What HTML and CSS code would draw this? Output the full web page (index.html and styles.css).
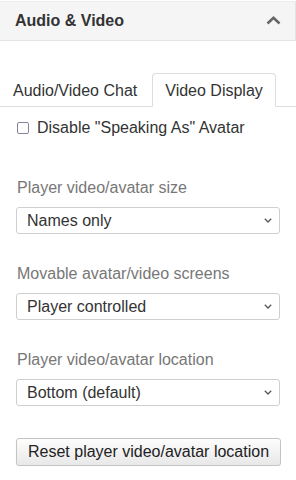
FILE: index.html
```html
<!DOCTYPE html>
<html lang="en">
<head>
    <meta charset="UTF-8">
    <meta name="viewport" content="width=device-width, initial-scale=1.0">
    <title>Audio &amp; Video</title>
    <link rel="stylesheet" href="styles.css">
</head>
<body>
    <div class="panel">
        <!-- Cabecera del panel -->
        <div class="panel-heading">
            <span class="panel-title">Audio &amp; Video</span>
            <svg class="collapse-icon" width="15" height="9" viewBox="0 0 15 9">
                <polyline points="1.5,7.5 7.5,1.8 13.5,7.5" fill="none" stroke="#666" stroke-width="2.6"/>
            </svg>
        </div>

        <!-- Pestañas -->
        <ul class="nav-tabs">
            <li class="tab">Audio/Video Chat</li>
            <li class="tab active">Video Display</li>
        </ul>

        <div class="tab-pane">
            <label class="check-row">
                <input type="checkbox" class="check">
                <span>Disable "Speaking As" Avatar</span>
            </label>

            <div class="field">
                <label for="avatarSize">Player video/avatar size</label>
                <div class="select-wrap">
                    <select id="avatarSize">
                        <option>Names only</option>
                        <option>Small</option>
                        <option>Medium</option>
                        <option>Large</option>
                    </select>
                    <svg class="select-arrow" width="8" height="5" viewBox="0 0 8 5">
                        <polyline points="0.8,0.8 4,4 7.2,0.8" fill="none" stroke="#555" stroke-width="1.3"/>
                    </svg>
                </div>
            </div>

            <div class="field">
                <label for="movable">Movable avatar/video screens</label>
                <div class="select-wrap">
                    <select id="movable">
                        <option>Player controlled</option>
                        <option>Locked</option>
                    </select>
                    <svg class="select-arrow" width="8" height="5" viewBox="0 0 8 5">
                        <polyline points="0.8,0.8 4,4 7.2,0.8" fill="none" stroke="#555" stroke-width="1.3"/>
                    </svg>
                </div>
            </div>

            <div class="field">
                <label for="location">Player video/avatar location</label>
                <div class="select-wrap">
                    <select id="location">
                        <option>Bottom (default)</option>
                        <option>Top</option>
                        <option>Left</option>
                        <option>Right</option>
                    </select>
                    <svg class="select-arrow" width="8" height="5" viewBox="0 0 8 5">
                        <polyline points="0.8,0.8 4,4 7.2,0.8" fill="none" stroke="#555" stroke-width="1.3"/>
                    </svg>
                </div>
            </div>

            <button type="button" class="btn">Reset player video/avatar location</button>
        </div>
    </div>
</body>
</html>
```

FILE: styles.css
```css
body {
    font-family: Arial, "Liberation Sans", sans-serif;
    font-size: 16px;
    color: #333;
    margin: 0;
    padding: 0;
    background-color: #ffffff;
}
.panel {
    width: 296px;
}
.panel-heading {
    margin-top: 1px;
    height: 38px;
    display: flex;
    align-items: center;
    justify-content: space-between;
    padding: 0 15px;
    background-color: #f5f5f5;
    border: 1px solid #e4e4e4;
    border-left: none;
    border-top-color: #ececec;
}
.panel-title {
    font-weight: bold;
    color: #333;
    line-height: 20px;
}
.collapse-icon {
    display: block;
    margin-right: -1px;
    margin-top: -2px;
}
.nav-tabs {
    list-style: none;
    margin: 32px 0 0;
    padding: 0;
    display: flex;
    border-bottom: 1px solid #ddd;
}
.tab {
    margin: 0 2px -1px 0;
    padding: 7px 12px 5px;
    line-height: 20px;
    border: 1px solid transparent;
    border-radius: 4px 4px 0 0;
    color: #333;
}
.tab.active {
    border-color: #ddd;
    border-bottom-color: #fff;
    background-color: #fff;
}
.tab-pane {
    padding: 11px 16px 0;
}
.check-row {
    display: flex;
    align-items: center;
    line-height: 20px;
    color: #333;
}
.check {
    appearance: none;
    -webkit-appearance: none;
    width: 12px;
    height: 12px;
    margin: 0 8px 0 1px;
    border: 1px solid #85859a;
    border-radius: 2px;
    background-color: #fff;
}
.field {
    margin-top: 40px;
}
.field + .field {
    margin-top: 30px;
}
.field label {
    display: block;
    line-height: 20px;
    margin: 0 0 9px 1px;
    color: #777;
}
.select-wrap {
    position: relative;
    width: 264px;
}
select {
    appearance: none;
    -webkit-appearance: none;
    display: block;
    width: 264px;
    height: 27px;
    padding: 0 24px 0 10px;
    font-family: Arial, "Liberation Sans", sans-serif;
    font-size: 16px;
    color: #333;
    background-color: #fff;
    border: 1px solid #cfcfcf;
    border-radius: 3px;
}
.select-arrow {
    position: absolute;
    right: 8px;
    top: 11px;
    pointer-events: none;
}
.btn {
    margin-top: 32px;
    height: 28px;
    padding: 0 11px;
    white-space: nowrap;
    font-family: Arial, "Liberation Sans", sans-serif;
    font-size: 16px;
    color: #222;
    background: linear-gradient(#fdfdfd, #e8e8e8);
    border: 1px solid #c4c4c4;
    border-radius: 3px;
    box-shadow: 0 1px 1px rgba(0, 0, 0, 0.08);
}
```
